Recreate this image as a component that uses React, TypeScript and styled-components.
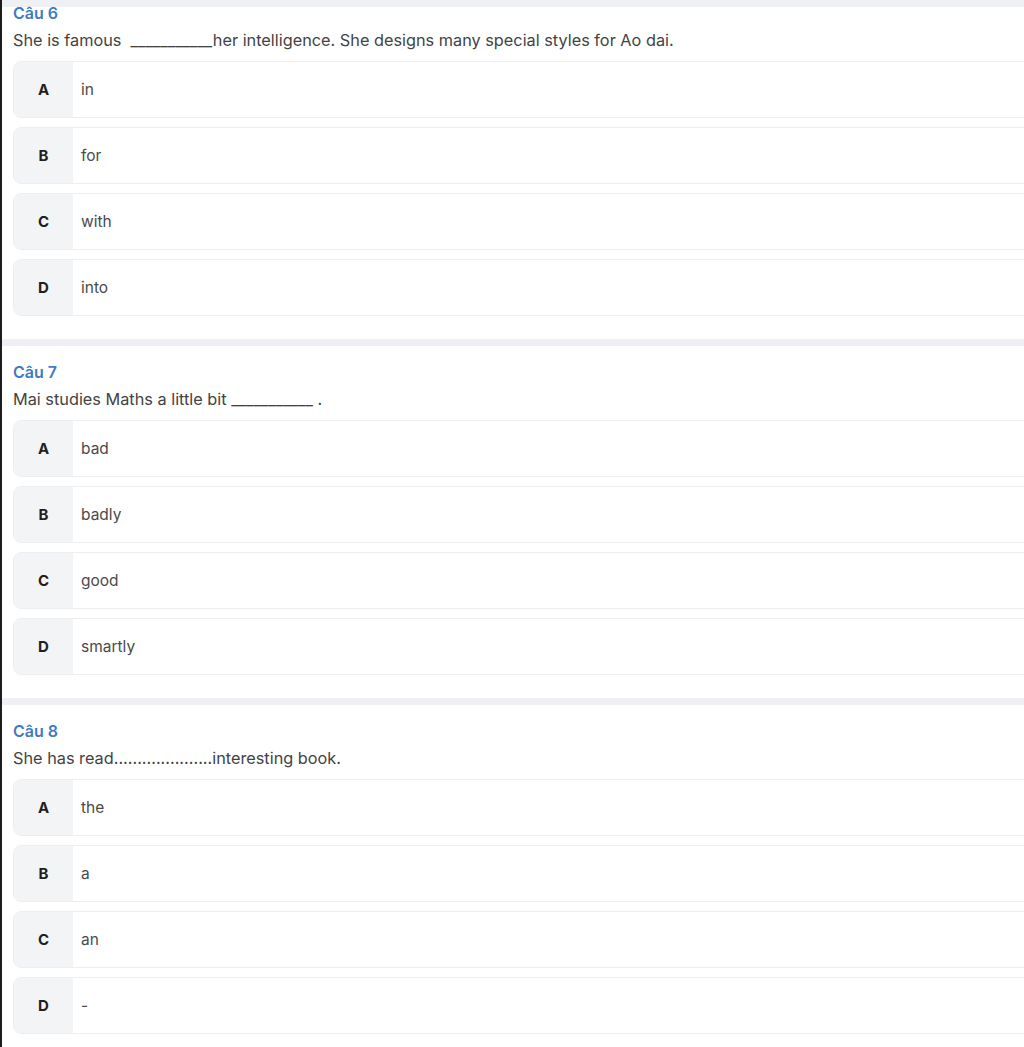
import styled, { createGlobalStyle } from 'styled-components';

const GlobalStyle = createGlobalStyle`
  html, body {
    margin: 0;
    padding: 0;
    background: #ffffff;
    overflow-x: hidden;
  }
  body {
    font-family: Inter, 'Noto Sans', 'Liberation Sans', sans-serif;
  }
`;

const Page = styled.div`
  min-height: 100vh;
  border-left: 2px solid #1c1c1c;
  background: #ffffff;
  overflow: hidden;
`;

const Band = styled.div`
  height: 7px;
  background: #eff0f3;
`;

const Section = styled.section<{ $first?: boolean }>`
  padding: ${(p) => (p.$first ? '0' : '15px')} 0 23px 11px;
`;

const Title = styled.div<{ $first?: boolean }>`
  font-size: 16px;
  line-height: 22px;
  font-weight: 600;
  color: #3d7cc2;
  margin-top: ${(p) => (p.$first ? '-5px' : '0')};
  margin-bottom: 5px;
`;

const Question = styled.div`
  font-size: 16.3px;
  line-height: 22px;
  color: #434343;
  margin-bottom: 10px;
  white-space: pre;
`;

const Options = styled.div`
  display: flex;
  flex-direction: column;
  gap: 9px;
  margin-right: -12px;
`;

const OptionRow = styled.div`
  display: flex;
  height: 57px;
  box-sizing: border-box;
  border: 1px solid #eceef1;
  border-radius: 8px;
  overflow: hidden;
  background: #ffffff;
`;

const Letter = styled.div`
  width: 59px;
  flex-shrink: 0;
  display: flex;
  align-items: center;
  justify-content: center;
  background: #f3f4f6;
  font-size: 15px;
  font-weight: 700;
  color: #1f1f1f;
`;

const Answer = styled.div`
  display: flex;
  align-items: center;
  padding-left: 8px;
  font-size: 15.5px;
  color: #4a4a4a;
`;

type Q = { num: number; text: string; options: string[] };

const questions: Q[] = [
  {
    num: 6,
    text: 'She is famous  ___________her intelligence. She designs many special styles for Ao dai.',
    options: ['in', 'for', 'with', 'into'],
  },
  {
    num: 7,
    text: 'Mai studies Maths a little bit ___________ .',
    options: ['bad', 'badly', 'good', 'smartly'],
  },
  {
    num: 8,
    text: 'She has read.....................interesting book.',
    options: ['the', 'a', 'an', '-'],
  },
];

const letters = ['A', 'B', 'C', 'D'];

const QuestionBlock = ({ q, first }: { q: Q; first: boolean }) => (
  <Section $first={first}>
    <Title $first={first}>Câu {q.num}</Title>
    <Question>{q.text}</Question>
    <Options>
      {q.options.map((opt, i) => (
        <OptionRow key={letters[i]}>
          <Letter>{letters[i]}</Letter>
          <Answer>{opt}</Answer>
        </OptionRow>
      ))}
    </Options>
  </Section>
);

const App = () => (
  <>
    <GlobalStyle />
    <Page>
      {questions.map((q, i) => (
        <div key={q.num}>
          <Band />
          <QuestionBlock q={q} first={i === 0} />
        </div>
      ))}
    </Page>
  </>
);

export default App;
